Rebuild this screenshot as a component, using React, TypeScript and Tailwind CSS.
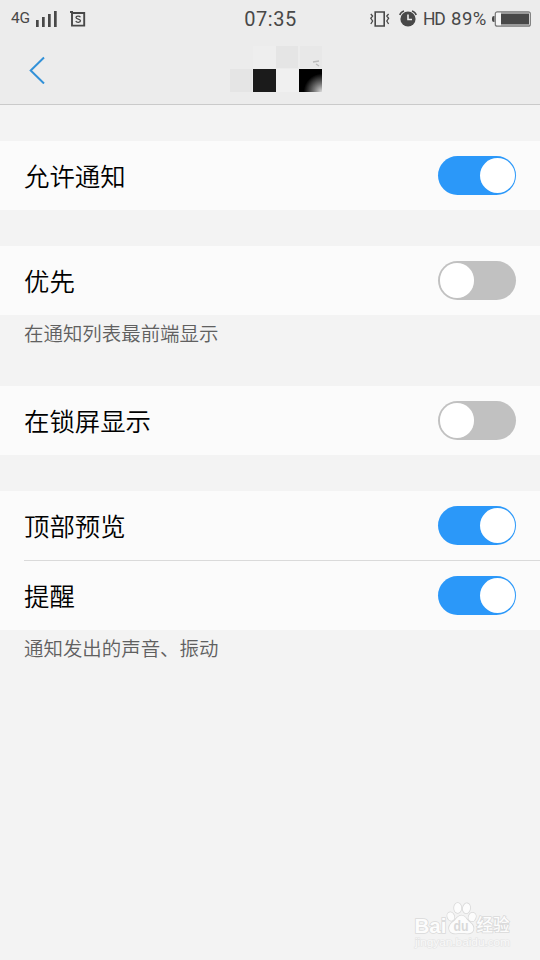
import React from 'react';

function Toggle({ on, label }: { on: boolean; label: string }) {
  return (
    <button
      role="switch"
      aria-checked={on}
      aria-label={label}
      className={
        'mb-[0.5px] flex h-[38.5px] w-[78px] items-center rounded-full px-[1.5px] ' +
        (on ? 'justify-end bg-[#2b98f9]' : 'justify-start bg-[#c1c1c1]')
      }
    >
      <span className="block size-[34.5px] rounded-full bg-white" />
    </button>
  );
}

function Row({ label, on }: { label: string; on: boolean }) {
  return (
    <div className="flex h-full flex-1 items-center justify-between pr-6">
      <span className="mb-[2px] text-[25.4px] leading-[38px] font-[350] text-black">{label}</span>
      <Toggle on={on} label={label} />
    </div>
  );
}

function StatusBar() {
  return (
    <div className="grid h-9 grid-cols-[1fr_auto_1fr] items-center pt-px pr-[9px] pl-[11px] font-['Roboto','Noto_Sans_CJK_SC',sans-serif] text-[#484848]">
      <div className="flex items-center">
        <span className="w-[21px] text-[15.5px] tracking-[-0.2px]">4G</span>
        <svg className="ml-1 h-4 w-[21px]" viewBox="0 0 21 16" fill="currentColor">
          <path d="M0 9h2.7v7H0zM6 6h2.7v10H6zM12 3h2.7v13H12zM18 0h2.7v16H18z" />
        </svg>
        <svg className="ml-[13px] size-4" viewBox="0 0 16 16" fill="none" stroke="currentColor">
          <path d="M2 2h12.2v12.6H2z" strokeWidth="1.9" />
          <path d="M0 1h3" strokeWidth="2" />
          <path d="M10.4 6.3C9.7 4.8 6 4.8 6 6.6c0 2.1 4.5 1.1 4.5 3.2 0 1.9-4 2-4.7.2" strokeWidth="1.3" />
        </svg>
      </div>
      <span className="-ml-px text-[20px] leading-6 tracking-[0.5px]">07:35</span>
      <div className="flex items-center justify-end">
        <svg className="h-4 w-[20px]" viewBox="0 0 20 16" fill="none" stroke="currentColor">
          <path d="M5.2 1h9v14h-9z" strokeWidth="1.6" />
          <path d="m.8 3 1.8 2-1.8 2.3L2.6 10 .8 13M18.6 3l-1.8 2 1.8 2.3-1.8 2.7 1.8 3" strokeWidth="1.3" />
        </svg>
        <svg className="ml-[9px] h-[17px] w-[18px]" viewBox="0 0 18 17">
          <circle cx="9" cy="9" r="7.6" fill="currentColor" />
          <path d="M.8 5A6 6 0 0 1 5 .9M17.2 5A6 6 0 0 0 13 .9" fill="none" stroke="currentColor" strokeWidth="1.6" />
          <path d="M9 4.5v5h4" fill="none" stroke="#ececec" strokeWidth="1.6" />
        </svg>
        <span className="ml-[6px] w-[22px] text-[17.5px] leading-6 tracking-[-1.2px]">HD</span>
        <span className="ml-[6px] w-[37px] text-[18.5px] leading-6 tracking-[0.5px]">89%</span>
        <svg className="ml-1 h-4 w-[39px]" viewBox="0 0 39 16">
          <path d="M2.5 5H2a2 2 0 0 0-2 2v2a2 2 0 0 0 2 2h.5z" fill="#484848" />
          <rect x="3.3" y=".8" width="35" height="14.4" rx="2" fill="#f5f5f5" stroke="#777" strokeWidth="1.2" />
          <path d="M9 1h28v14H9z" fill="#999" />
          <path d="M9 3h28v10H9z" fill="#484848" />
        </svg>
      </div>
    </div>
  );
}

function ObscuredTitle() {
  return (
    <svg className="h-[58px] w-[122px]" viewBox="203 46 122 58">
      <defs>
        <radialGradient id="corner" cx="1" cy="1" r="1">
          <stop offset="0" stopColor="#ddd" />
          <stop offset=".35" stopColor="#777" />
          <stop offset=".8" stopColor="#000" />
        </radialGradient>
      </defs>
      <path d="M253 46h23v23h-23z" fill="#eee" />
      <path d="M276 46h22v22h-22z" fill="#e5e5e5" />
      <path d="M300 46h22v22h-22z" fill="#e8e8e8" />
      <path d="M230 69h22v23h-22z" fill="#e5e5e5" />
      <path d="M253 69h23v23h-23z" fill="#1b1b1b" />
      <path d="M276 69h23v23h-23z" fill="#f0f0f0" />
      <path d="M299 69h23v23h-23z" fill="url(#corner)" />
      <path d="m313 62 6-1M316 64l3 2" stroke="#bbb" strokeWidth="1.3" />
    </svg>
  );
}

function Watermark() {
  return (
    <div className="absolute top-[901px] left-[413px] h-[50px] w-[102px]">
      <svg className="h-full w-full" viewBox="0 0 102 50" fill="#fcfcfc" stroke="#d9d9d9" strokeWidth="1.6" paintOrder="stroke">
        <text x="1.5" y="31.5" fontFamily="Liberation Sans, sans-serif" fontSize="21" fontWeight="bold" textLength="32" lengthAdjust="spacingAndGlyphs">Bai</text>
        <ellipse cx="37.8" cy="15.5" rx="3.3" ry="4.3" transform="rotate(-20 37.8 15.5)" />
        <ellipse cx="44.7" cy="7" rx="3.6" ry="5" />
        <ellipse cx="53.5" cy="7.3" rx="3.6" ry="5" transform="rotate(10 53.5 7.3)" />
        <ellipse cx="59.2" cy="16" rx="3.5" ry="4.3" transform="rotate(20 59.2 16)" />
        <path d="M48.5 14.5c-4 0-5 4-8.5 6.5-3 2.2-4.8 5.5-3.4 8.5 1.7 4 6.4 2.7 11.9 2.7s10 1.3 11.6-2.7c1.2-3-.4-6-3.4-8.3-3.6-2.7-4.2-6.7-8.2-6.7z" />
        <text x="40.5" y="29.5" fontFamily="Liberation Sans, sans-serif" fontSize="14" fontWeight="bold" textLength="15" lengthAdjust="spacingAndGlyphs" fill="#d9d9d9" stroke="none">du</text>
        <text x="63.5" y="30" fontFamily="Noto Sans CJK SC, sans-serif" fontSize="16.5" fontWeight="500" textLength="33">经验</text>
        <text x="2" y="45" fontFamily="Liberation Sans, sans-serif" fontSize="10" textLength="95" lengthAdjust="spacingAndGlyphs" fill="#f9f9f9" stroke="#e5e5e5" strokeWidth="1.2">jingyan.baidu.com</text>
      </svg>
    </div>
  );
}

export default function App() {
  return (
    <div className="relative h-[960px] w-[540px] overflow-hidden bg-[#f3f3f3] font-['Noto_Sans_CJK_SC',sans-serif]">
      <header className="h-[105px] border-b border-[#cacaca] bg-[#ececec]">
        <StatusBar />
        <div className="flex h-[68px] items-start pl-7">
          <button aria-label="返回" className="mt-5 h-7 w-[18px]">
            <svg className="h-full w-full" viewBox="0 0 18 28" fill="none" stroke="#3291d8" strokeWidth="2">
              <path d="M16 1.5 2.7 14.5 16 27.5" />
            </svg>
          </button>
          <div className="mt-[10px] ml-[157px]">
            <ObscuredTitle />
          </div>
        </div>
      </header>
      <main className="flex flex-col pt-9">
        <section className="flex h-[69px] bg-[#fbfbfb] pl-6">
          <Row label="允许通知" on={true} />
        </section>
        <section className="mt-9">
          <div className="flex h-[69px] bg-[#fbfbfb] pl-6">
            <Row label="优先" on={false} />
          </div>
          <p className="h-[35px] pl-6 text-[19.45px] leading-[36px] font-[350] text-[#606060]">在通知列表最前端显示</p>
        </section>
        <section className="mt-9 flex h-[69px] bg-[#fbfbfb] pl-6">
          <Row label="在锁屏显示" on={false} />
        </section>
        <section className="mt-9">
          <div className="bg-[#fbfbfb] pl-6">
            <div className="flex h-[70px] border-b border-[#dadada]">
              <Row label="顶部预览" on={true} />
            </div>
            <div className="flex h-[69px]">
              <Row label="提醒" on={true} />
            </div>
          </div>
          <p className="h-[35px] pl-6 text-[19.45px] leading-[36px] font-[350] text-[#606060]">通知发出的声音、振动</p>
        </section>
      </main>
      <Watermark />
    </div>
  );
}
